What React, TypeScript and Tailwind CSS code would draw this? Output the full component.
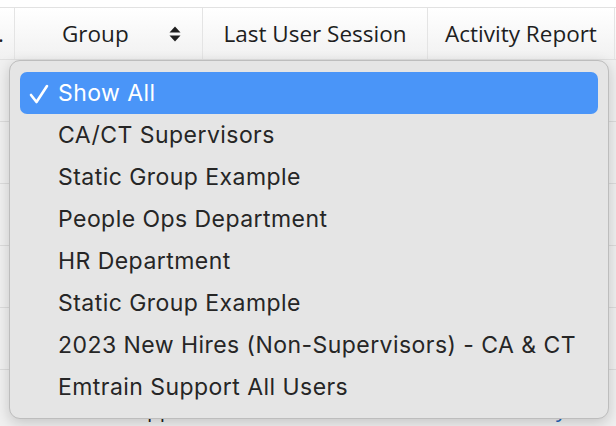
const groups = [
  'CA/CT Supervisors',
  'Static Group Example',
  'People Ops Department',
  'HR Department',
  'Static Group Example',
  '2023 New Hires (Non-Supervisors) - CA & CT',
  'Emtrain Support All Users',
];

const SortIcon = () => (
  <svg width="12" height="16" viewBox="0 0 12 16" className="fill-[#1e1e1e]">
    <path d="M6 0.5 L11.5 6.5 H0.5 Z" />
    <path d="M6 15.5 L11.5 9.5 H0.5 Z" />
  </svg>
);

export default function App() {
  return (
    <div className="relative w-[616px] h-[426px] overflow-hidden bg-[#f0f0f0] font-['Open_Sans',sans-serif] text-[#1e1e1e]">
      <div className="h-[8px] bg-white border-b border-[#e2e2e2]"></div>

      {/* header */}
      <div className="flex h-[52px] bg-gradient-to-b from-white to-[#f1f1f1] border-b border-[#e0e0e0] text-[22.5px]">
        <div className="w-[15px] border-r border-[#e4e4e4] flex items-center justify-end overflow-hidden pr-[10px]">
          <span>.</span>
        </div>
        <div className="w-[188px] border-r border-[#e4e4e4] flex items-center pl-[47px] pr-[21px] justify-between">
          <span>Group</span>
          <SortIcon />
        </div>
        <div className="w-[225px] border-r border-[#e4e4e4] flex items-center justify-center">
          Last User Session
        </div>
        <div className="w-[187px] border-r border-[#e4e4e4] flex items-center justify-center">
          Activity Report
        </div>
      </div>

      {/* table rows behind the menu */}
      <div className="flex flex-col">
        {[0, 1, 2, 3, 4, 5].map((i) => (
          <div key={i} className="h-[62px] border-b border-[#dcdcdc] bg-[#f0f0f0]"></div>
        ))}
      </div>
      <div className="absolute left-[40px] top-[399px] text-[21px] leading-none text-[#222]">Emtrain Support</div>
      <div className="absolute left-[556px] top-[399px] text-[21px] leading-none text-[#2563b8]">y</div>

      {/* dropdown */}
      <div className="absolute left-[9px] top-[60px] w-[600px] h-[359px] rounded-[11px] bg-[#e5e5e5] border border-[#bdbdbd] shadow-[0_4px_14px_rgba(0,0,0,0.18)] px-[10px] pt-[11px] font-['Inter',sans-serif] text-[23px] tracking-[0.45px]">
        <div className="flex items-center h-[42px] rounded-[7px] bg-[#4a95f8] text-white pl-[9px]">
          <svg width="20" height="20" viewBox="0 0 20 20" className="mr-[9px] mt-[2px]" fill="none" stroke="white" strokeWidth="2.6" strokeLinecap="round" strokeLinejoin="round">
            <path d="M2 11 L7.5 18 L18 2" />
          </svg>
          <span>Show All</span>
        </div>
        {groups.map((g, i) => (
          <div key={i} className="flex items-center h-[42px] pl-[38px] text-[#262626]">
            {g}
          </div>
        ))}
      </div>
    </div>
  );
}
